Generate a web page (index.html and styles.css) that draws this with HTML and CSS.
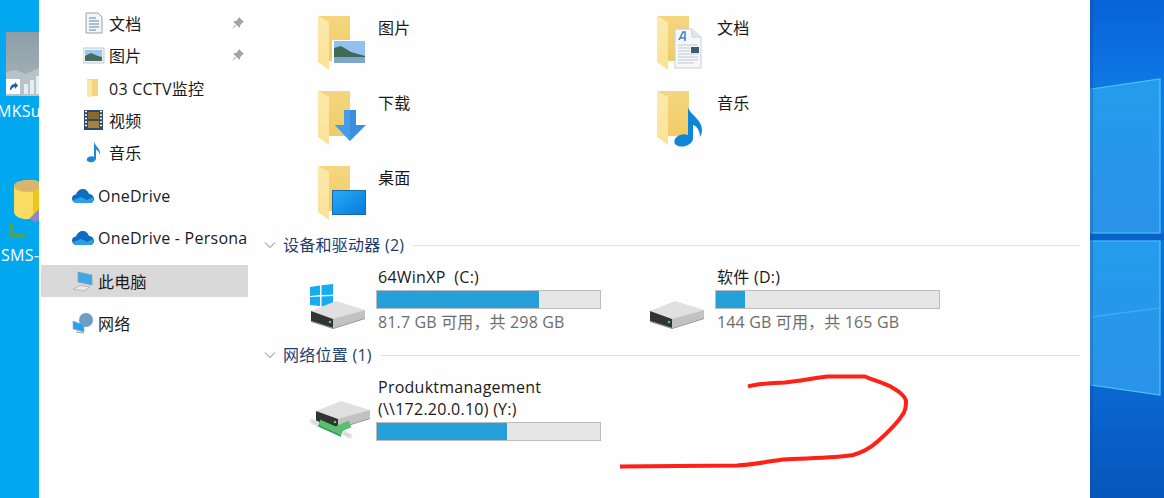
FILE: index.html
```html
<!DOCTYPE html>
<html lang="zh-CN">
<head>
<meta charset="utf-8">
<title>此电脑</title>
<link rel="stylesheet" href="styles.css">
</head>
<body>
<svg class="defs" width="0" height="0" aria-hidden="true">
  <defs>
    <linearGradient id="fold" x1="0" y1="0" x2="0" y2="1"><stop offset="0" stop-color="#f5d680"/><stop offset="1" stop-color="#f0cc66"/></linearGradient>
    <linearGradient id="flap" x1="0" y1="0" x2="0" y2="1"><stop offset="0" stop-color="#fce9ac"/><stop offset="1" stop-color="#fbe297"/></linearGradient>
    <linearGradient id="skyblue" x1="0" y1="0" x2="1" y2="1"><stop offset="0" stop-color="#25adf5"/><stop offset="1" stop-color="#0a78dc"/></linearGradient>
    <linearGradient id="wall" x1="0" y1="0" x2="0" y2="1"><stop offset="0" stop-color="#0862d8"/><stop offset=".2" stop-color="#0f7ce6"/><stop offset=".8" stop-color="#0b66d0"/><stop offset="1" stop-color="#0756ba"/></linearGradient>
    <linearGradient id="pane" x1="0" y1="0" x2="0" y2="1"><stop offset="0" stop-color="#249cec"/><stop offset="1" stop-color="#2a92ea"/></linearGradient>
    <linearGradient id="mkgrey" x1="0" y1="0" x2="0" y2="1"><stop offset="0" stop-color="#8d9ea8"/><stop offset="1" stop-color="#a9b5bb"/></linearGradient>
    <symbol id="folder" viewBox="0 0 50 56">
      <path d="M1 1H33V46H10V8Z" fill="url(#fold)"/>
      <path d="M1 1L12 7V55L1 47Z" fill="url(#flap)"/>
    </symbol>
    <symbol id="disk" viewBox="0 0 56 30">
      <path d="M1 11L26 1L55 10L23 20Z" fill="#e0e0e0"/>
      <path d="M1 11L23 19V28L1 21Z" fill="#333"/>
      <path d="M23 19L55 10V18L23 28Z" fill="#c2c2c2"/>
      <path d="M1 21L23 28L55 18V19L23 29L1 22Z" fill="#8d8d8d"/>
      <circle cx="20" cy="22" r="1.2" fill="#4fd86a"/>
    </symbol>
    <symbol id="pin" viewBox="0 0 14 14">
      <path d="M8 1L13 6L11 7L9 9.500L8.500 12L2 5.500L5 5L7 3Z M4 9L1 13L5 10Z" fill="#a3a3a3"/>
    </symbol>
    <symbol id="cloud" viewBox="0 0 22 16">
      <path d="M5 15C1 15 0 12 0 10.500C0 8 2 6.500 4 6.500C5 3 8 1 11 1C14 1 16 3 17 6C20 6 22 8.500 22 11C22 13 20.500 15 18 15Z" fill="#0f6cc0"/>
      <path d="M5 15C2 15 1 13 1 12L9 9L15 12L21 9C22 12 20.500 15 18 15Z" fill="#2d9fe3"/>
    </symbol>
  </defs>
</svg>

<div class="desktop">
  <div class="shortcut shortcut-mk">
    <svg width="33" height="64" viewBox="0 0 33 64">
      <rect width="33" height="64" fill="url(#mkgrey)"/>
      <path d="M0 40L10 38L20 42L33 36V64H0Z" fill="#b8c3c9"/>
      <rect x="0" y="47" width="14" height="15" fill="#fff"/>
      <path d="M4 58C4 54 6 52 9 52V50L12 53.500L9 57V55C7 55 6 56 5 58Z" fill="#1c5fb8"/>
      <rect x="18" y="52" width="4" height="10" fill="#e8edef"/>
      <rect x="24" y="48" width="4" height="14" fill="#e8edef"/>
      <rect x="30" y="44" width="3" height="18" fill="#e8edef"/>
    </svg>
  </div>
  <span class="desk-label label-mk">MKSu</span>
  <div class="shortcut shortcut-sms">
    <svg width="30" height="60" viewBox="0 0 30 60">
      <path d="M5 8C5 3 13 1 20 1C27 1 30 2 30 4V34C26 38 20 41 15 40C9 39 5 36 5 33Z" fill="#f9dc60"/>
      <ellipse cx="19" cy="7" rx="14" ry="6" fill="#d8b46c"/>
      <path d="M24 12L30 10V30L24 36Z" fill="#eec61a"/>
      <path d="M21 39L30 30V40L26 44Z" fill="#8f86c4"/>
      <path d="M0 45H5V54H16V59H0Z" fill="#4aa360"/>
    </svg>
  </div>
  <span class="desk-label label-sms">SMS-</span>
</div>

<main class="window">
  <nav class="sidebar">
    <ul class="nav-group quick">
      <li class="nav-row">
        <svg class="nav-icon" viewBox="0 0 22 22"><path d="M3 1H15L19 5V21H3Z" fill="#f4f6f8" stroke="#9aa0a6"/><path d="M6 6H13M6 9H16M6 12H16M6 15H16M6 18H13" stroke="#5a87b5"/></svg>
        <span class="nav-text">文档</span>
        <svg class="pin"><use href="#pin"/></svg>
      </li>
      <li class="nav-row">
        <svg class="nav-icon" viewBox="0 0 22 22"><rect x="0" y="4" width="21" height="15" fill="#eef2f5" stroke="#c3c9ce"/><rect x="2" y="6" width="17" height="11" fill="#9cc7ec"/><path d="M2 12L8 9L15 12L19 13V17H2Z" fill="#476b5e"/></svg>
        <span class="nav-text">图片</span>
        <svg class="pin"><use href="#pin"/></svg>
      </li>
      <li class="nav-row">
        <svg class="nav-icon" viewBox="0 0 22 22"><path d="M4 2H15V19H8L4 20Z" fill="#f3d47f"/><path d="M4 2L9 4V20L4 20Z" fill="#fbe7a8"/></svg>
        <span class="nav-text">03 CCTV监控</span>
      </li>
      <li class="nav-row">
        <svg class="nav-icon" viewBox="0 0 22 22"><rect x="1" y="1" width="19" height="20" fill="#2c4a6e"/><path d="M2 2.500H4M2 6H4M2 9.500H4M2 13H4M2 16.500H4M17 2.500H19M17 6H19M17 9.500H19M17 13H19M17 16.500H19" stroke="#fff" stroke-width="1.500"/><rect x="5" y="3" width="11" height="7" fill="#8a6a2c"/><rect x="5" y="12" width="11" height="7" fill="#a9813a"/></svg>
        <span class="nav-text">视频</span>
      </li>
      <li class="nav-row">
        <svg class="nav-icon" viewBox="0 0 22 22"><path d="M11 0C12 6 18 7 17 14C16 10 14 9 13 8.500V17C13 20.500 9 22 6 21C3 20 3 17 6 15.800C8 15 10 15 11 16Z" fill="#1e88d8"/></svg>
        <span class="nav-text">音乐</span>
      </li>
    </ul>
    <ul class="nav-group">
      <li class="nav-row nav-top">
        <svg class="nav-icon"><use href="#cloud"/></svg>
        <span class="nav-text">OneDrive</span>
      </li>
    </ul>
    <ul class="nav-group before-selected">
      <li class="nav-row nav-top">
        <svg class="nav-icon"><use href="#cloud"/></svg>
        <span class="nav-text">OneDrive - Personal</span>
      </li>
    </ul>
    <ul class="nav-group">
      <li class="nav-row nav-top selected">
        <svg class="nav-icon" viewBox="0 0 22 22"><path d="M6 2L20 5V15L6 12Z" fill="#3fa9e8" stroke="#7f9fb5" stroke-width=".7"/><path d="M1 19L8 15.500L18 17L12 21Z" fill="#e9e9e9" stroke="#a8a8a8" stroke-width=".7"/></svg>
        <span class="nav-text">此电脑</span>
      </li>
    </ul>
    <ul class="nav-group">
      <li class="nav-row nav-top">
        <svg class="nav-icon" viewBox="0 0 22 22"><circle cx="14" cy="8" r="7" fill="#6d9cc4"/><path d="M1 9L12 13V20L1 17Z" fill="#2f9fe6" stroke="#8bb3cf" stroke-width=".6"/><path d="M4 20L12 21" stroke="#9a9a9a"/></svg>
        <span class="nav-text">网络</span>
      </li>
    </ul>
  </nav>

  <section class="content">
    <div class="folders">
      <div class="folder-tile">
        <svg class="folder-art" viewBox="0 0 56 60">
          <use href="#folder" width="50" height="56" x="0" y="0"/>
          <rect x="15" y="25" width="34" height="26" fill="#fff"/>
          <rect x="17" y="26" width="31" height="22" fill="#8fc2ee"/>
          <path d="M17 33L24 31L34 37L48 41V44H17Z" fill="#3f6a58"/>
          <rect x="17" y="42" width="31" height="6" fill="#7fa6c6"/>
        </svg>
        <span class="tile-name">图片</span>
      </div>
      <div class="folder-tile">
        <svg class="folder-art" viewBox="0 0 56 60">
          <use href="#folder" width="50" height="56" x="0" y="0"/>
          <path d="M19 14H36L45 22V53H19Z" fill="#f6f7f9" stroke="#c9ced3"/>
          <path d="M36 14V22H45" fill="#e3e6ea" stroke="#c9ced3"/>
          <path d="M23 25L27 17H29V26M24 23H29" fill="none" stroke="#3a7fcb" stroke-width="1.500"/>
          <path d="M22 30H42M22 33H34M22 36H34M22 39H42M22 42H42M22 45H42M22 48H38" stroke="#bfc8d2"/>
          <rect x="35" y="32" width="8" height="6" fill="#3b5c70"/>
        </svg>
        <span class="tile-name">文档</span>
      </div>
      <div class="folder-tile">
        <svg class="folder-art" viewBox="0 0 56 60">
          <use href="#folder" width="50" height="56" x="0" y="0"/>
          <path d="M27 20H39V35H49L33 51L18 35H27Z" fill="#3a8fdf"/>
          <path d="M33 51L18 35H27V20H33Z" fill="#479be8"/>
        </svg>
        <span class="tile-name">下载</span>
      </div>
      <div class="folder-tile">
        <svg class="folder-art" viewBox="0 0 56 60">
          <use href="#folder" width="50" height="56" x="0" y="0"/>
          <path d="M32 17C34 25 46 29 46 40C46 43 45 45 44 47C44 41 41 36 37 35V49C36 55 27 58 22 56C16 54 18 47 24 45C27 44 30 44 32 45Z" fill="#0f86d8"/>
        </svg>
        <span class="tile-name">音乐</span>
      </div>
      <div class="folder-tile">
        <svg class="folder-art" viewBox="0 0 56 60">
          <use href="#folder" width="50" height="56" x="0" y="0"/>
          <rect x="15.500" y="25.500" width="33" height="24" fill="url(#skyblue)" stroke="#1a6aa8"/>
        </svg>
        <span class="tile-name">桌面</span>
      </div>
    </div>

    <header class="group-head">
      <svg class="chevron" viewBox="0 0 12 8"><path d="M1 1.500L6 6.500L11 1.500" fill="none" stroke="#7a7a7a"/></svg>
      <h2 class="group-title">设备和驱动器 (2)</h2>
      <span class="group-line"></span>
    </header>
    <div class="drives">
      <div class="drive-tile">
        <svg class="drive-art" viewBox="0 0 58 46">
          <path d="M2 3L12 1.500V11L2 12ZM13.500 1.300L25 0V10.700L13.500 11ZM2 13L12 12.500V22L2 21ZM13.500 12.500L25 12V24L13.500 22.500Z" fill="#14aef0"/>
          <use href="#disk" x="2" y="16" width="56" height="30"/>
        </svg>
        <div class="drive-info">
          <span class="drive-name">64WinXP&nbsp; (C:)</span>
          <div class="bar"><div class="bar-fill" style="width:72.500%"></div></div>
          <span class="drive-sub">81.7 GB 可用，共 298 GB</span>
        </div>
      </div>
      <div class="drive-tile">
        <svg class="drive-art" viewBox="0 0 58 46">
          <use href="#disk" x="2" y="16" width="56" height="30"/>
        </svg>
        <div class="drive-info">
          <span class="drive-name">软件 (D:)</span>
          <div class="bar"><div class="bar-fill" style="width:13%"></div></div>
          <span class="drive-sub">144 GB 可用，共 165 GB</span>
        </div>
      </div>
    </div>

    <header class="group-head second">
      <svg class="chevron" viewBox="0 0 12 8"><path d="M1 1.500L6 6.500L11 1.500" fill="none" stroke="#7a7a7a"/></svg>
      <h2 class="group-title">网络位置 (1)</h2>
      <span class="group-line"></span>
    </header>
    <div class="drives">
      <div class="drive-tile">
        <svg class="drive-art net-art" viewBox="0 0 58 46">
          <use href="#disk" x="7" y="0" width="56" height="30"/>
          <path d="M4 21L9 24M36 33L42 36" stroke="#e6e6e6" stroke-width="5" stroke-linecap="round"/>
          <path d="M4 21L9 24M36 33L42 36" stroke="#c8c8c8" stroke-width="1"/>
          <path d="M11 23L34 33M28 30L42 24" fill="none" stroke="#58c070" stroke-width="7"/>
          <path d="M11 26L33 36" stroke="#3c9c56" stroke-width="1.500"/>
        </svg>
        <div class="drive-info">
          <span class="drive-name">Produktmanagement</span>
          <span class="drive-name">(\\172.20.0.10) (Y:)</span>
          <div class="bar"><div class="bar-fill" style="width:58.500%"></div></div>
        </div>
      </div>
    </div>
  </section>
</main>

<svg class="wallpaper" viewBox="0 0 74 498" preserveAspectRatio="none">
  <rect width="74" height="498" fill="url(#wall)"/>
  <path d="M1 89L70 79V233H1Z" fill="url(#pane)" stroke="#4cc8f0" stroke-width="1.200"/>
  <path d="M1 241H70V395L1 385Z" fill="url(#pane)" stroke="#4cc8f0" stroke-width="1.200"/>
  <path d="M1 317L70 308" stroke="#41b4f2" stroke-width="1.200"/>
  <rect y="234" width="74" height="6" fill="#0a62c8"/>
  <rect width="3" height="498" fill="#0a4fa0" opacity=".4"/>
</svg>

<svg class="scribble" width="1164" height="498" viewBox="0 0 1164 498">
  <path d="M748 386.500C760 383 775 383 785 382.500C798 381 815 378 827 376.500L865 376.500C872 380 885 383 893 388C900 392 905 396 906 401C906 406 906 410 903 414C897 424 885 435 877 442C868 450 860 453 853 455C835 458 810 458 783 459.500C765 462 750 465 737 465.500L620 466.500" fill="none" stroke="#ff2016" stroke-width="4" stroke-linejoin="round"/>
</svg>
</body>
</html>
```
FILE: styles.css
```css
* { box-sizing: border-box; }

html, body {
  margin: 0;
  padding: 0;
}

body {
  position: relative;
  display: flex;
  width: 1164px;
  height: 498px;
  overflow: hidden;
  background: #01a8ef;
  font-family: "Open Sans", "Noto Sans CJK SC", sans-serif;
  font-size: 16px;
  letter-spacing: .25px;
  color: #1a1a1a;
}

.defs { position: absolute; }

.desktop {
  position: relative;
  flex: 0 0 39px;
  overflow: hidden;
  background: #01a8ef;
}

.shortcut { position: absolute; }
.shortcut svg { display: block; }
.shortcut-mk { left: 6px; top: 32px; }
.shortcut-sms { left: 9px; top: 179px; }

.desk-label {
  position: absolute;
  color: #fff;
  font-size: 16px;
  line-height: 22px;
  white-space: nowrap;
}
.label-mk { left: -3px; top: 100px; }
.label-sms { left: 1px; top: 244px; }

.window {
  flex: 0 0 1051px;
  display: flex;
  min-width: 0;
  background: #fff;
}

.sidebar {
  flex: 0 0 212px;
  width: 212px;
  min-width: 0;
  padding: 7px 3px 0 2px;
  overflow: hidden;
  background: #fff;
}

.nav-group {
  list-style: none;
  margin: 0 0 10px;
  padding: 0;
}
.nav-group.quick { margin-bottom: 11.75px; }
.nav-group.before-selected { margin-bottom: 11px; }

.nav-row {
  display: flex;
  align-items: center;
  width: 207px;
  height: 32.25px;
  padding-left: 42px;
  overflow: hidden;
  white-space: nowrap;
}

.nav-top {
  height: 32px;
  padding-left: 31px;
  gap: 4px;
}

.nav-icon {
  flex: 0 0 22px;
  width: 22px;
  height: 22px;
  margin-right: 4px;
}
.nav-top .nav-icon { margin-right: 0; }

.nav-text { flex: none; }

.pin {
  width: 14px;
  height: 14px;
  margin-left: auto;
  margin-right: 3px;
}

.selected {
  background: #d9d9d9;
}

.content {
  flex: 0 0 839px;
  width: 839px;
  min-width: 0;
  padding-top: 15px;
  background: #fefefe;
}

.folders {
  display: grid;
  grid-template-columns: 339px 339px;
  grid-auto-rows: 60px;
  row-gap: 15px;
  padding-left: 66px;
}

.folder-tile {
  display: flex;
  align-items: flex-start;
}

.folder-art {
  flex: 0 0 56px;
  width: 56px;
  height: 60px;
}

.tile-name {
  margin-left: 5px;
  line-height: 26px;
}

.group-head {
  display: flex;
  align-items: center;
  height: 20px;
  margin: 10px 10px 11px 13px;
}
.group-head.second { margin-top: 12px; }

.chevron {
  flex: 0 0 12px;
  width: 12px;
  height: 8px;
  margin-right: 7px;
}

.group-title {
  margin: 0 0 3px;
  font-size: 16px;
  font-weight: 400;
  color: #1f3d6e;
  white-space: nowrap;
}

.group-line {
  flex: 1;
  height: 1px;
  margin-left: 9px;
  background: #e2e2e2;
}

.drives {
  display: grid;
  grid-template-columns: 339px 339px;
  padding-left: 57px;
}

.drive-tile {
  display: flex;
  align-items: flex-start;
}

.drive-art {
  flex: 0 0 58px;
  width: 58px;
  height: 46px;
  margin-top: 18px;
  margin-right: 10px;
  overflow: visible;
}
.drive-art.net-art { margin-top: 24px; }

.drive-info {
  display: flex;
  flex-direction: column;
  width: 225px;
}

.drive-name {
  padding-left: 2px;
  line-height: 22px;
  white-space: nowrap;
}

.drive-sub {
  padding-left: 2px;
  line-height: 22px;
  letter-spacing: .15px;
  color: #6d6d6d;
  white-space: nowrap;
}

.bar {
  height: 19px;
  margin: 2px 0;
  background: #e6e6e6;
  border: 1px solid #bcbcbc;
}

.bar-fill {
  height: 100%;
  background: #26a0da;
}

.wallpaper {
  flex: 0 0 74px;
  display: block;
  width: 74px;
  height: 498px;
}

.scribble {
  position: absolute;
  left: 0;
  top: 0;
  pointer-events: none;
}
```
